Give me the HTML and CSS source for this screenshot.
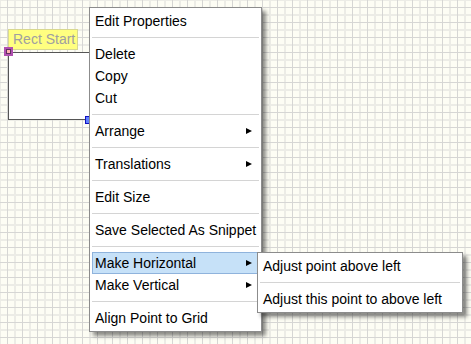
FILE: index.html
```html
<!DOCTYPE html>
<html>
<head>
<meta charset="utf-8">
<link rel="stylesheet" href="styles.css">
</head>
<body>
<div class="canvas">
  <div class="shape-rect"></div>
  <div class="label">Rect Start</div>
  <div class="handle handle-start"></div>
  <div class="handle handle-end"></div>

  <div class="menu">
    <div class="item">Edit Properties</div>
    <div class="sep"></div>
    <div class="item">Delete</div>
    <div class="item">Copy</div>
    <div class="item">Cut</div>
    <div class="sep"></div>
    <div class="item has-sub">Arrange<span class="arrow"></span></div>
    <div class="sep"></div>
    <div class="item has-sub">Translations<span class="arrow"></span></div>
    <div class="sep"></div>
    <div class="item">Edit Size</div>
    <div class="sep"></div>
    <div class="item">Save Selected As Snippet</div>
    <div class="sep"></div>
    <div class="item has-sub active">Make Horizontal<span class="arrow"></span>
      <div class="menu submenu">
        <div class="item">Adjust point above left</div>
        <div class="sep"></div>
        <div class="item">Adjust this point to above left</div>
      </div>
    </div>
    <div class="item has-sub">Make Vertical<span class="arrow"></span></div>
    <div class="sep"></div>
    <div class="item">Align Point to Grid</div>
  </div>
</div>
</body>
</html>
```
FILE: styles.css
```css
html, body {
  margin: 0;
  padding: 0;
}
body {
  width: 471px;
  height: 344px;
  overflow: hidden;
  font-family: "Liberation Sans", Arial, sans-serif;
  font-size: 14px;
}
.canvas {
  position: relative;
  width: 471px;
  height: 344px;
  background-color: #fdfdf4;
  background-image:
    linear-gradient(to right, #d6d6d4 1px, transparent 1px),
    linear-gradient(to bottom, #d6d6d4 1px, transparent 1px),
    linear-gradient(to right, #ecece6 2px, transparent 2px),
    linear-gradient(to bottom, #ecece6 2px, transparent 2px);
  background-size: 15px 15px;
  background-position: 7px 7px, 7px 7px, 14px 14px, 14px 14px;
}
.shape-rect {
  position: absolute;
  left: 8px;
  top: 52px;
  width: 82px;
  height: 68px;
  box-sizing: border-box;
  border: 1px solid #555;
  background: #fff;
}
.label {
  position: absolute;
  left: 8px;
  top: 29px;
  width: 70px;
  height: 21px;
  box-sizing: border-box;
  border: 1px solid #d8d890;
  background: #ffff80;
  color: #a0a0a0;
  line-height: 19px;
  padding-left: 4px;
  white-space: nowrap;
}
.handle {
  position: absolute;
  box-sizing: border-box;
}
.handle-start {
  left: 4px;
  top: 47px;
  width: 9px;
  height: 9px;
  border: 2px solid #b050b0;
  background: #ffb0b0;
  box-shadow: inset 0 0 0 1px #603060;
}
.handle-end {
  left: 85px;
  top: 116px;
  width: 8px;
  height: 8px;
  border: 1px solid #1010c0;
  background: #6080ff;
}
.menu {
  position: absolute;
  left: 89px;
  top: 7px;
  width: 173px;
  box-sizing: border-box;
  border: 1px solid #8c8c8c;
  background: #fff;
  padding: 2px;
  box-shadow: 4px 4px 4px rgba(0, 0, 0, 0.45);
  color: #000;
}
.item {
  position: relative;
  height: 22px;
  line-height: 22px;
  padding-left: 3px;
  white-space: nowrap;
  box-sizing: border-box;
}
.item.active {
  background: #c6e1f8;
  border: 1px solid #8fb3dc;
  line-height: 20px;
  padding-left: 2px;
}
.arrow {
  position: absolute;
  right: 7px;
  top: 8px;
  width: 0;
  height: 0;
  border-left: 6px solid #000;
  border-top: 3px solid transparent;
  border-bottom: 3px solid transparent;
}
.item.active .arrow {
  right: 6px;
  top: 7px;
}
.sep {
  height: 11px;
  background: linear-gradient(#d4d4d4, #d4d4d4) no-repeat 0 5px / 100% 1px;
}
.submenu {
  left: 164px;
  top: -1px;
  width: 206px;
  line-height: 22px;
}
.submenu .item {
  padding-left: 3px;
}
```
